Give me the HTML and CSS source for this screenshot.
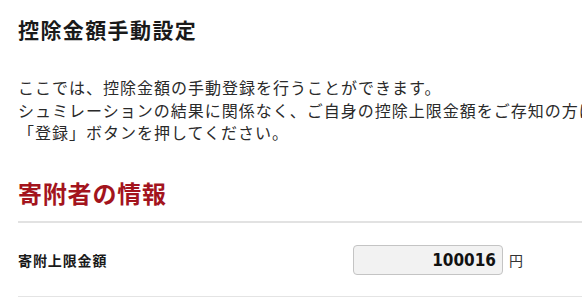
FILE: index.html
```html
<!DOCTYPE html>
<html lang="ja">
<head>
<meta charset="utf-8">
<title>控除金額手動設定</title>
<link rel="stylesheet" href="styles.css">
</head>
<body>
<main class="page">
  <h1 class="page-title">控除金額手動設定</h1>
  <p class="lead">ここでは、控除金額の手動登録を行うことができます。<br>シュミレーションの結果に関係なく、ご自身の控除上限金額をご存知の方は、金額を入力して<br>「登録」ボタンを押してください。</p>
  <h2 class="section-title">寄附者の情報</h2>
  <div class="form-row">
    <div class="form-label">寄附上限金額</div>
    <div class="form-field">
      <input class="amount" type="text" value="100016" readonly>
      <span class="unit">円</span>
    </div>
  </div>
</main>
</body>
</html>
```
FILE: styles.css
```css
html {
  overflow: hidden;
  background: #fff;
}
body {
  margin: 0;
  font-family: "Noto Sans CJK JP", "Noto Sans", sans-serif;
  color: #222;
}
.page {
  width: 1000px;
  padding: 14px 0 0 18px;
}
.page-title {
  margin: 0;
  font-size: 21px;
  line-height: 30px;
  letter-spacing: 1.4px;
  font-weight: 700;
  color: #1a1a1a;
}
.lead {
  margin: 32px 0 0;
  font-size: 16px;
  line-height: 22.5px;
  letter-spacing: 1px;
  color: #2a2a2a;
  white-space: nowrap;
}
.section-title {
  margin: 31px 0 0;
  padding-bottom: 10px;
  font-size: 24px;
  line-height: 36px;
  letter-spacing: 0.8px;
  font-weight: 700;
  color: #a3141d;
  border-bottom: 2px solid #e2e2e2;
}
.form-row {
  display: flex;
  align-items: center;
  padding: 22px 0 21px;
  border-bottom: 1px solid #e4e4e4;
}
.form-label {
  width: 335px;
  font-size: 14px;
  font-weight: 700;
  letter-spacing: 0.9px;
  color: #1a1a1a;
}
.form-field {
  display: flex;
  align-items: center;
}
.amount {
  box-sizing: border-box;
  width: 150px;
  height: 30px;
  margin: 0;
  padding: 0 6px 0 6px;
  border: 1px solid #c4c4c4;
  border-radius: 4px;
  background: #f2f2f2;
  text-align: right;
  font-family: "DejaVu Sans Condensed", "DejaVu Sans", sans-serif;
  font-stretch: condensed;
  font-weight: 700;
  font-size: 17px;
  color: #111;
  outline: none;
}
.unit {
  margin-left: 6px;
  font-size: 14px;
  color: #333;
}
```
